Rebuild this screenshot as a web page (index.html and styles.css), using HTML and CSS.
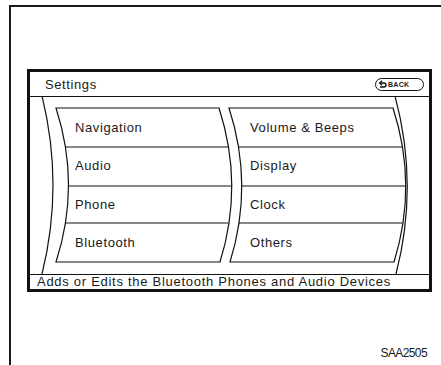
FILE: index.html
```html
<!DOCTYPE html>
<html lang="en">
<head>
    <meta charset="UTF-8">
    <meta name="viewport" content="width=device-width, initial-scale=1.0">
    <title>Settings Screen</title>
    <link rel="stylesheet" href="styles.css">
</head>
<body>
    <div class="frame">
        <!-- Display screen -->
        <div class="screen">
            <div class="screen-head">
                <span class="title">Settings</span>
                <span class="back-btn">
                    <svg class="back-icon" width="9" height="8" viewBox="0 0 9 8">
                        <path d="M2 3 H6 A2 2 0 0 1 6 7 H2" fill="none" stroke="#111" stroke-width="1.3"/>
                        <path d="M4 0.8 L1.6 3 L4 5.2" fill="none" stroke="#111" stroke-width="1.3"/>
                    </svg>BACK
                </span>
            </div>

            <div class="screen-body">
                <!-- curved drum lines, drawn in page coordinates -->
                <svg class="drum" width="399" height="177" viewBox="30 97 399 177">
                    <g fill="none" stroke="#111" stroke-width="1.2">
                        <path d="M42 96 Q64 185 42 274"/>
                        <path d="M56 108 H219 Q244 185 220 262 H56 Q81 185 56 108 Z"/>
                        <path d="M65.5 147 H228.5 M68.5 186 H231.5 M65.5 223 H228.5"/>
                        <path d="M229 108 H393 Q418 185 394 262 H230 Q254 185 229 108 Z"/>
                        <path d="M238.5 147 H402.7 M241.5 186 H405.7 M238.5 223 H402.7"/>
                        <path d="M395 96 Q419 185 396 274"/>
                    </g>
                </svg>

                <div class="menu">
                    <div class="item">Navigation</div>
                    <div class="item">Volume &amp; Beeps</div>
                    <div class="item">Audio</div>
                    <div class="item">Display</div>
                    <div class="item">Phone</div>
                    <div class="item">Clock</div>
                    <div class="item">Bluetooth</div>
                    <div class="item">Others</div>
                </div>
            </div>

            <div class="status">Adds or Edits the Bluetooth Phones and Audio Devices</div>
        </div>

        <div class="fig-code">SAA2505</div>
    </div>
</body>
</html>
```

FILE: styles.css
```css
body {
    margin: 0;
    font-family: "Liberation Sans", Arial, sans-serif;
    color: #1a1a1a;
    background-color: #fff;
}
.frame {
    margin: 5px 0 0 9px;
    height: 360px;
    box-sizing: border-box;
    border-top: 2px solid #1a1a1a;
    border-left: 2px solid #1a1a1a;
    padding: 62px 0 0 16px;
}
.screen {
    width: 405px;
    box-sizing: border-box;
    border: 3px solid #111;
}
.screen-head {
    height: 24px;
    display: flex;
    align-items: center;
    justify-content: space-between;
    padding: 0 5px 0 15px;
    border-bottom: 1px solid #111;
}
.title {
    font-size: 13px;
    letter-spacing: 0.6px;
}
.back-btn {
    display: flex;
    align-items: center;
    gap: 1px;
    width: 49px;
    height: 13px;
    box-sizing: border-box;
    padding-left: 2px;
    border: 1.5px solid #111;
    border-radius: 7px;
    font-size: 7px;
    font-weight: bold;
    letter-spacing: 0.3px;
}
.screen-body {
    position: relative;
    height: 177px;
}
.drum {
    position: absolute;
    left: 0;
    top: 0;
}
.menu {
    display: grid;
    grid-template-columns: 174px 1fr;
    grid-auto-rows: 38.5px;
    padding-top: 11px;
}
.item {
    display: flex;
    align-items: center;
    padding-left: 45px;
    font-size: 13px;
    letter-spacing: 0.6px;
}
.item:nth-child(even) {
    padding-left: 46px;
}
.status {
    border-top: 1px solid #111;
    padding-left: 7px;
    font-size: 13px;
    line-height: 14px;
    letter-spacing: 0.72px;
}
.fig-code {
    margin-top: 54px;
    padding-right: 14px;
    text-align: right;
    font-size: 12px;
    letter-spacing: -0.6px;
}
```
